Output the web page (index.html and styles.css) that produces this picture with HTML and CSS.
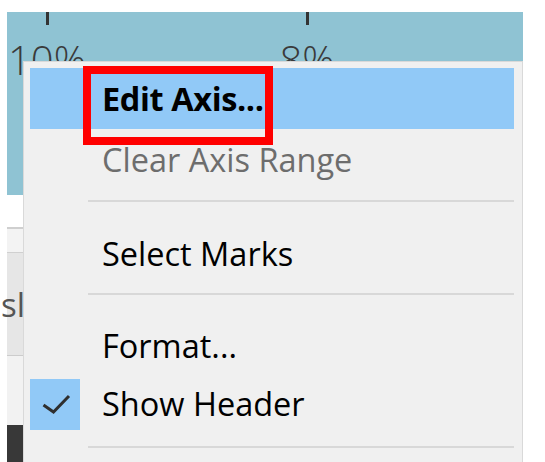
FILE: index.html
```html
<!DOCTYPE html>
<html>
<head>
<meta charset="utf-8">
<link rel="stylesheet" href="styles.css">
</head>
<body>
<div class="screen">
  <div class="topgap"></div>
  <div class="axis">
    <div class="tickgroup">
      <div class="tick"></div>
      <div class="ticklabel">10%</div>
    </div>
    <div class="tickgroup">
      <div class="tick"></div>
      <div class="ticklabel">8%</div>
    </div>
  </div>
  <div class="strip">
    <div class="strip-white"></div>
    <div class="strip-light"></div>
    <div class="strip-gray"><span class="strip-text">sl</span></div>
    <div class="strip-pale"></div>
    <div class="strip-dark"></div>
  </div>

  <div class="menu">
    <div class="item active">Edit Axis...<div class="callout"></div></div>
    <div class="item disabled">Clear Axis Range</div>
    <div class="sep sep1"></div>
    <div class="item">Select Marks</div>
    <div class="sep sep2"></div>
    <div class="item short">Format...</div>
    <div class="item checked">
      <div class="checkbox">
        <svg width="50" height="51" viewBox="0 0 50 51"><polyline points="13.5,26 23.5,33 39,17" fill="none" stroke="#2f2f2f" stroke-width="3"/></svg>
      </div>
      Show Header
    </div>
    <div class="sep sep3"></div>
  </div>
</div>
</body>
</html>
```

FILE: styles.css
```css
html, body {
  margin: 0;
  padding: 0;
  background: #ffffff;
}
.screen {
  position: relative;
  width: 545px;
  height: 462px;
  overflow: hidden;
  font-family: "Open Sans", "Noto Sans", sans-serif;
}
.topgap {
  height: 12px;
}
.axis {
  margin-left: 7px;
  width: 516px;
  height: 183px;
  background: #8fc3d3;
  display: flex;
  gap: 180px;
  overflow: hidden;
}
.tickgroup {
  width: 80px;
  display: flex;
  flex-direction: column;
  align-items: center;
}
.tick {
  width: 3px;
  height: 13px;
  background: #333333;
}
.ticklabel {
  margin-top: 15px;
  font-size: 40px;
  line-height: 1;
  color: #3a3a3a;
  font-weight: 300;
  white-space: nowrap;
}
.strip {
  margin-left: 7px;
  width: 16px;
  display: flex;
  flex-direction: column;
}
.strip-white {
  height: 32px;
  background: #ffffff;
  border-bottom: 2px solid #cfcfcf;
}
.strip-light {
  height: 23px;
  background: #f3f3f3;
  border-bottom: 1px solid #d0d0d0;
}
.strip-gray {
  height: 102px;
  background: #e6e6e6;
  border-bottom: 1px solid #cccccc;
  display: flex;
  justify-content: flex-end;
  align-items: center;
}
.strip-text {
  font-size: 33px;
  color: #555555;
  white-space: nowrap;
  margin-right: -2px;
}
.strip-pale {
  height: 69px;
  background: #f2f2f2;
}
.strip-dark {
  height: 40px;
  background: #383838;
}

.menu {
  position: absolute;
  left: 23px;
  top: 61px;
  width: 484px;
  height: 420px;
  padding: 6px 8px 0 6px;
  background: #f0f0f0;
  border: 1px solid #d9d9d9;
}
.item {
  position: relative;
  height: 61px;
  display: flex;
  align-items: center;
  padding-left: 72px;
  font-size: 32.5px;
  color: #000000;
  white-space: nowrap;
}
.item.active {
  background: #91c9f7;
  font-weight: 700;
  letter-spacing: -0.4px;
}
.item.disabled {
  color: #6d6d6d;
}
.item.short {
  height: 56px;
}
.callout {
  position: absolute;
  left: 53px;
  top: -2px;
  width: 190px;
  height: 79px;
  box-sizing: border-box;
  border: 8px solid #ff0000;
}
.checkbox {
  position: absolute;
  left: 0;
  top: 6px;
  width: 50px;
  height: 51px;
  background: #91c9f7;
}
.checkbox svg {
  display: block;
}
.sep {
  height: 2px;
  margin-left: 58px;
  background: #d8d8d8;
}
.sep1 {
  margin-top: 10px;
  margin-bottom: 21px;
}
.sep2 {
  margin-top: 9px;
  margin-bottom: 22px;
}
.sep3 {
  margin-top: 12px;
}
```
